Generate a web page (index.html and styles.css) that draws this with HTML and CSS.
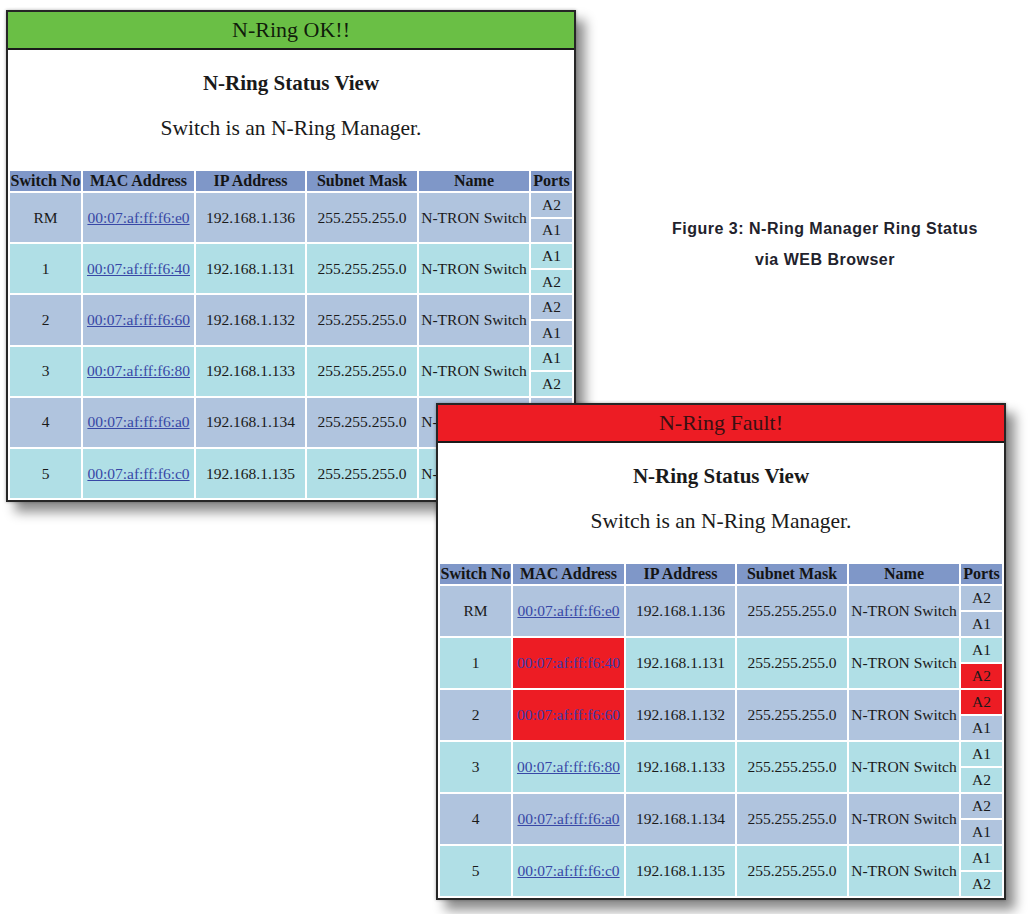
FILE: index.html
```html
<!DOCTYPE html>
<html lang="en">
<head>
  <meta charset="UTF-8">
  <title>Figure 3: N-Ring Manager Ring Status via WEB Browser</title>
  <link rel="stylesheet" href="styles.css">
</head>
<body>
  <div class="figure">

    <!-- ring healthy -->
    <div class="view view-ok">
      <div class="view-title">N-Ring OK!!</div>
      <div class="view-body">
        <h2>N-Ring Status View</h2>
        <p>Switch is an N-Ring Manager.</p>
        <table class="ring">
          <tr>
            <th class="c-no">Switch No</th>
            <th class="c-mac">MAC Address</th>
            <th class="c-ip">IP Address</th>
            <th class="c-mask">Subnet Mask</th>
            <th class="c-name">Name</th>
            <th>Ports</th>
          </tr>
          <tr class="steel">
            <td rowspan="2">RM</td>
            <td rowspan="2"><a href="#">00:07:af:ff:f6:e0</a></td>
            <td rowspan="2">192.168.1.136</td>
            <td rowspan="2">255.255.255.0</td>
            <td rowspan="2">N-TRON Switch</td>
            <td class="port">A2</td>
          </tr>
          <tr class="steel"><td class="port">A1</td></tr>
          <tr class="powder">
            <td rowspan="2">1</td>
            <td rowspan="2"><a href="#">00:07:af:ff:f6:40</a></td>
            <td rowspan="2">192.168.1.131</td>
            <td rowspan="2">255.255.255.0</td>
            <td rowspan="2">N-TRON Switch</td>
            <td class="port">A1</td>
          </tr>
          <tr class="powder"><td class="port">A2</td></tr>
          <tr class="steel">
            <td rowspan="2">2</td>
            <td rowspan="2"><a href="#">00:07:af:ff:f6:60</a></td>
            <td rowspan="2">192.168.1.132</td>
            <td rowspan="2">255.255.255.0</td>
            <td rowspan="2">N-TRON Switch</td>
            <td class="port">A2</td>
          </tr>
          <tr class="steel"><td class="port">A1</td></tr>
          <tr class="powder">
            <td rowspan="2">3</td>
            <td rowspan="2"><a href="#">00:07:af:ff:f6:80</a></td>
            <td rowspan="2">192.168.1.133</td>
            <td rowspan="2">255.255.255.0</td>
            <td rowspan="2">N-TRON Switch</td>
            <td class="port">A1</td>
          </tr>
          <tr class="powder"><td class="port">A2</td></tr>
          <tr class="steel">
            <td rowspan="2">4</td>
            <td rowspan="2"><a href="#">00:07:af:ff:f6:a0</a></td>
            <td rowspan="2">192.168.1.134</td>
            <td rowspan="2">255.255.255.0</td>
            <td rowspan="2">N-TRON Switch</td>
            <td class="port">A2</td>
          </tr>
          <tr class="steel"><td class="port">A1</td></tr>
          <tr class="powder">
            <td rowspan="2">5</td>
            <td rowspan="2"><a href="#">00:07:af:ff:f6:c0</a></td>
            <td rowspan="2">192.168.1.135</td>
            <td rowspan="2">255.255.255.0</td>
            <td rowspan="2">N-TRON Switch</td>
            <td class="port">A1</td>
          </tr>
          <tr class="powder"><td class="port">A2</td></tr>
        </table>
      </div>
    </div>

    <div class="caption">
      Figure 3: N-Ring Manager Ring Status<br>
      via WEB Browser
    </div>

    <!-- ring broken between switch 1 and 2 -->
    <div class="view view-fault">
      <div class="view-title">N-Ring Fault!</div>
      <div class="view-body">
        <h2>N-Ring Status View</h2>
        <p>Switch is an N-Ring Manager.</p>
        <table class="ring">
          <tr>
            <th class="c-no">Switch No</th>
            <th class="c-mac">MAC Address</th>
            <th class="c-ip">IP Address</th>
            <th class="c-mask">Subnet Mask</th>
            <th class="c-name">Name</th>
            <th>Ports</th>
          </tr>
          <tr class="steel">
            <td rowspan="2">RM</td>
            <td rowspan="2"><a href="#">00:07:af:ff:f6:e0</a></td>
            <td rowspan="2">192.168.1.136</td>
            <td rowspan="2">255.255.255.0</td>
            <td rowspan="2">N-TRON Switch</td>
            <td class="port">A2</td>
          </tr>
          <tr class="steel"><td class="port">A1</td></tr>
          <tr class="powder">
            <td rowspan="2">1</td>
            <td rowspan="2" class="alarm"><a href="#">00:07:af:ff:f6:40</a></td>
            <td rowspan="2">192.168.1.131</td>
            <td rowspan="2">255.255.255.0</td>
            <td rowspan="2">N-TRON Switch</td>
            <td class="port">A1</td>
          </tr>
          <tr class="powder"><td class="port alarm">A2</td></tr>
          <tr class="steel">
            <td rowspan="2">2</td>
            <td rowspan="2" class="alarm"><a href="#">00:07:af:ff:f6:60</a></td>
            <td rowspan="2">192.168.1.132</td>
            <td rowspan="2">255.255.255.0</td>
            <td rowspan="2">N-TRON Switch</td>
            <td class="port alarm">A2</td>
          </tr>
          <tr class="steel"><td class="port">A1</td></tr>
          <tr class="powder">
            <td rowspan="2">3</td>
            <td rowspan="2"><a href="#">00:07:af:ff:f6:80</a></td>
            <td rowspan="2">192.168.1.133</td>
            <td rowspan="2">255.255.255.0</td>
            <td rowspan="2">N-TRON Switch</td>
            <td class="port">A1</td>
          </tr>
          <tr class="powder"><td class="port">A2</td></tr>
          <tr class="steel">
            <td rowspan="2">4</td>
            <td rowspan="2"><a href="#">00:07:af:ff:f6:a0</a></td>
            <td rowspan="2">192.168.1.134</td>
            <td rowspan="2">255.255.255.0</td>
            <td rowspan="2">N-TRON Switch</td>
            <td class="port">A2</td>
          </tr>
          <tr class="steel"><td class="port">A1</td></tr>
          <tr class="powder">
            <td rowspan="2">5</td>
            <td rowspan="2"><a href="#">00:07:af:ff:f6:c0</a></td>
            <td rowspan="2">192.168.1.135</td>
            <td rowspan="2">255.255.255.0</td>
            <td rowspan="2">N-TRON Switch</td>
            <td class="port">A1</td>
          </tr>
          <tr class="powder"><td class="port">A2</td></tr>
        </table>
      </div>
    </div>

  </div>
</body>
</html>
```

FILE: styles.css
```css
:root {
  --ok-green: #6abf45;
  --fault-red: #ed1c24;
  --head-blue: #7f97c8;
  --steel: #b0c4de;
  --powder: #b0dfe6;
  --link: #3848a6;
}

body {
  margin: 0;
  background: #ffffff;
  font-family: "Liberation Serif", "Times New Roman", serif;
  color: #1a1a1a;
}

.figure {
  position: relative;
  width: 1032px;
  height: 914px;
  overflow: hidden;
}

/* the two browser captures */
.view {
  position: absolute;
  width: 566px;
  border: 2px solid #262626;
  background: #ffffff;
  box-shadow: 9px 10px 11px rgba(0, 0, 0, 0.45), 0 0 3px rgba(0, 0, 0, 0.3);
}

.view-ok {
  left: 6px;
  top: 10px;
}

.view-fault {
  left: 436px;
  top: 403px;
}

.view-title {
  height: 36px;
  line-height: 36px;
  border-bottom: 2px solid #1a1a1a;
  font-size: 22px;
  text-align: center;
  color: rgba(0, 0, 0, 0.85);
}

.view-ok .view-title {
  background: var(--ok-green);
}

.view-fault .view-title {
  background: var(--fault-red);
  color: #3a1012;
}

.view-body {
  text-align: center;
}

.view-body h2 {
  margin: 21px 0 0;
  font-size: 21px;
  line-height: 24px;
}

.view-body p {
  margin: 21px 0 0;
  font-size: 21.5px;
  line-height: 24px;
}

/* status table */
.ring {
  width: 100%;
  margin-top: 29px;
  border-spacing: 2px;
  table-layout: fixed;
  background: #ffffff;
}

.ring th {
  height: 20px;
  padding: 0;
  background: var(--head-blue);
  font-size: 16px;
  line-height: 20px;
  white-space: nowrap;
  color: #141414;
}

.c-no { width: 71px; }
.c-mac { width: 111px; }
.c-ip { width: 109px; }
.c-mask { width: 110px; }
.c-name { width: 110px; }

.ring td {
  padding: 0;
  font-size: 15.5px;
  text-align: center;
  white-space: nowrap;
  color: #1a1a1a;
}

.ring td.port {
  height: 24px;
  line-height: 20px;
}

/* the healthy capture was taken a touch shorter */
.view-ok .ring td.port {
  height: 23.6px;
}

.ring tr.steel td {
  background: var(--steel);
}

.ring tr.powder td {
  background: var(--powder);
}

.ring a {
  color: var(--link);
  text-decoration: underline;
}

.ring tr td.alarm {
  background: var(--fault-red);
}

.ring td.alarm a {
  color: #3a3aa8;
  text-decoration: none;
}

/* figure caption */
.caption {
  position: absolute;
  left: 640px;
  top: 213px;
  width: 370px;
  font-family: "Liberation Sans", Arial, sans-serif;
  font-size: 16px;
  font-weight: bold;
  letter-spacing: 0.5px;
  line-height: 31px;
  text-align: center;
  color: #22222c;
}
```
